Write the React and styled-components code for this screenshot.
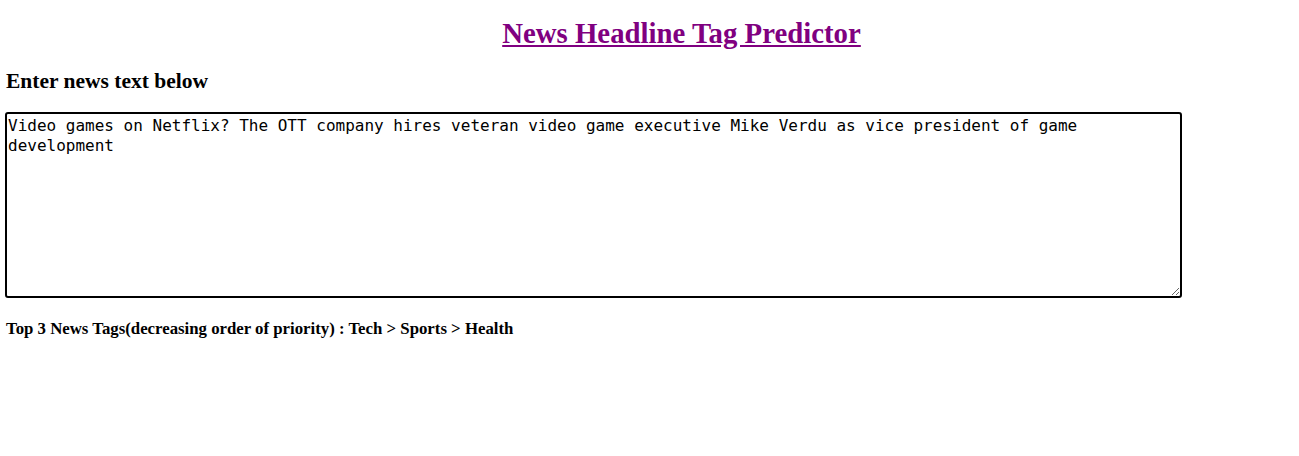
import React, { useState } from 'react';
import styled, { createGlobalStyle } from 'styled-components';

const GlobalStyle = createGlobalStyle`
  body {
    margin: 0;
    background: #fff;
    font-family: 'Liberation Serif', 'Times New Roman', serif;
    color: #000;
  }
`;

const Page = styled.main`
  padding: 0 5px;
`;

const Header = styled.header`
  text-align: center;
  padding: 17px 0 0 64px;
`;

const TitleLink = styled.a`
  font-size: 28.8px;
  font-weight: bold;
  color: #800080;
  text-decoration: underline;
`;

const SectionLabel = styled.h3`
  font-size: 21.5px;
  font-weight: bold;
  margin: 19px 0 18px 1px;
`;

const NewsInput = styled.textarea`
  display: block;
  box-sizing: border-box;
  width: 1177px;
  height: 186px;
  margin: 0;
  padding: 2px 1px;
  border: 2px solid #000;
  border-radius: 3px;
  outline: none;
  font-family: 'DejaVu Sans Mono', 'Liberation Mono', monospace;
  font-size: 16px;
  line-height: 20px;
  color: #000;
  resize: both;
`;

const Result = styled.p`
  font-size: 16.8px;
  font-weight: bold;
  margin: 21px 0 0 1px;
`;

export default function App() {
  const [text, setText] = useState(
    'Video games on Netflix? The OTT company hires veteran video game executive Mike Verdu as vice president of game development'
  );
  const tags = ['Tech', 'Sports', 'Health'];
  return (
    <>
      <GlobalStyle />
      <Page>
        <Header>
          <TitleLink href='#'>News Headline Tag Predictor</TitleLink>
        </Header>
        <SectionLabel>Enter news text below</SectionLabel>
        <NewsInput value={text} onChange={(e) => setText(e.target.value)} spellCheck={false} />
        <Result>Top 3 News Tags(decreasing order of priority) : {tags.join(' > ')}</Result>
      </Page>
    </>
  );
}
